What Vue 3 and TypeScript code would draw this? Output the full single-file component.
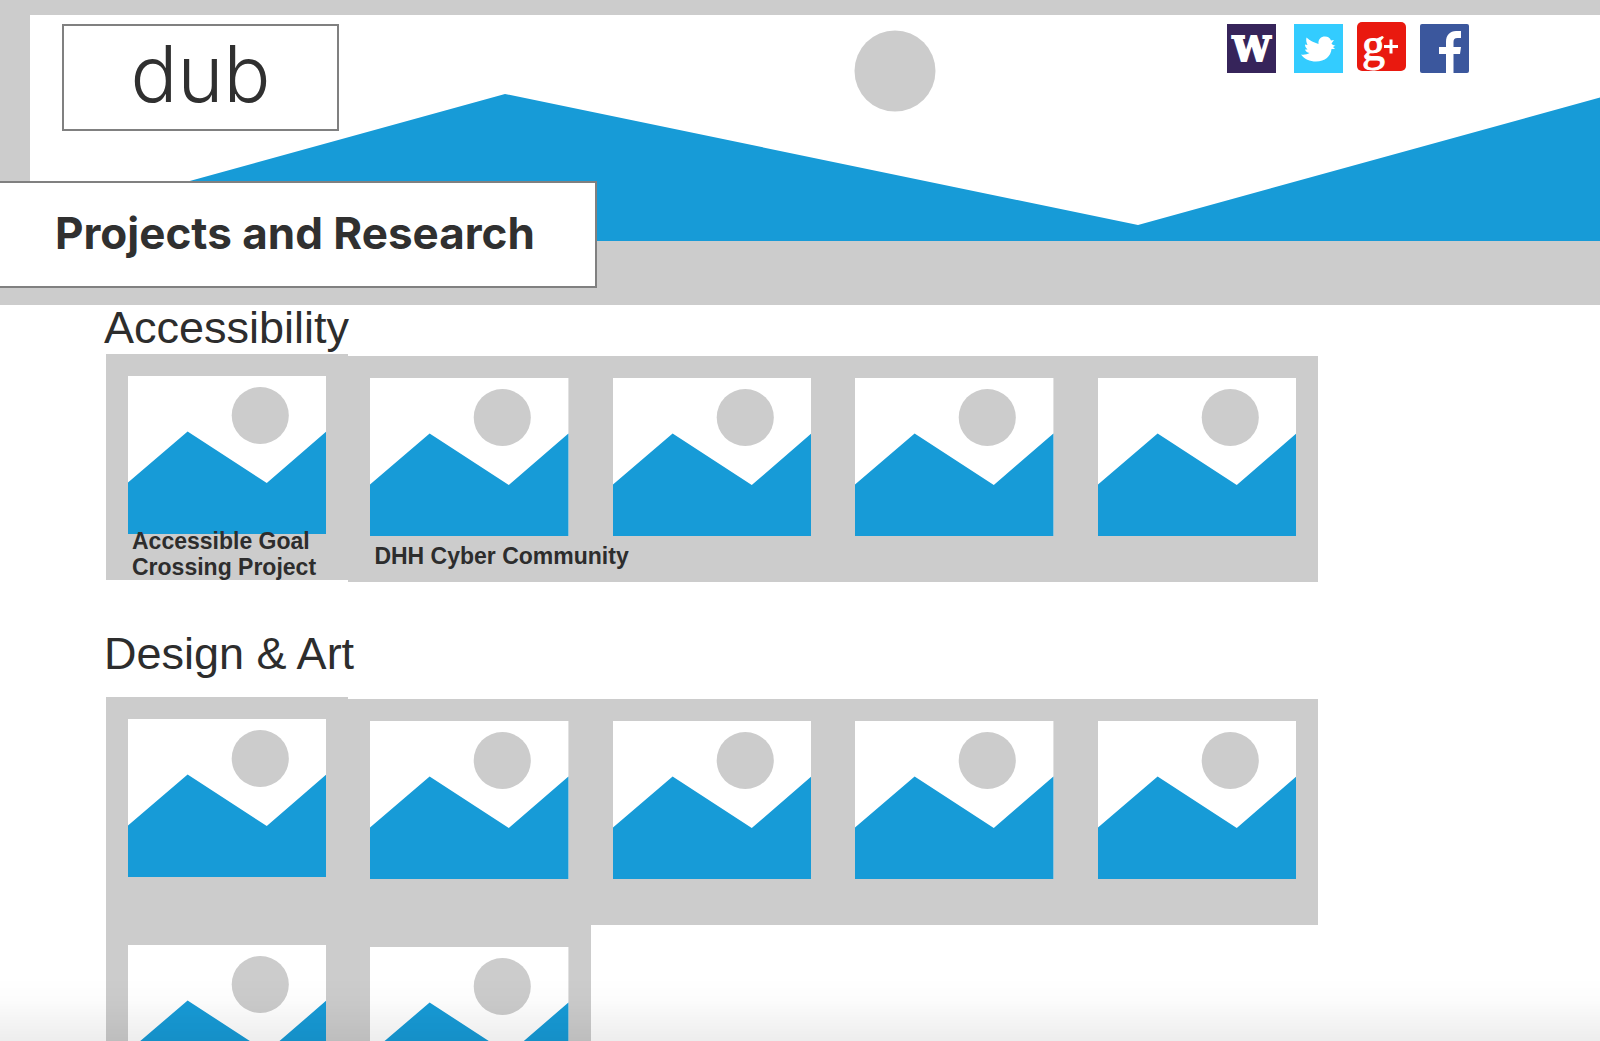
<script setup lang="ts">
interface Project {
  id: number
  title?: string
}

interface Section {
  id: string
  title: string
  projects: Project[]
}

const sections: Section[] = [
  {
    id: 'accessibility',
    title: 'Accessibility',
    projects: [
      { id: 1, title: 'Accessible Goal Crossing Project' },
      { id: 2, title: 'DHH Cyber Community' },
      { id: 3 },
      { id: 4 },
      { id: 5 },
    ],
  },
  {
    id: 'design-art',
    title: 'Design & Art',
    projects: [1, 2, 3, 4, 5, 6, 7].map((id) => ({ id })),
  },
]
</script>

<template>
  <div class="page">
    <header class="hero">
      <svg class="hero-art" viewBox="0 0 1600 305" preserveAspectRatio="xMinYMin slice" aria-hidden="true">
        <rect x="30" y="15" width="1570" height="226" fill="#fff" />
        <circle cx="895" cy="71" r="40.5" fill="#ccc" />
        <path d="M30 225 505 94 1138 225 1600 97.500V241H30Z" fill="#179bd7" />
      </svg>
      <div class="hero-top">
        <a class="logo" href="#">dub</a>
        <nav class="social" aria-label="Social links">
          <a href="#" aria-label="University of Washington">
            <svg width="49" height="51" viewBox="0 0 49 51">
              <rect y="2" width="49" height="49" fill="#36245a" />
              <text class="mark-w" x="24.500" y="39" text-anchor="middle">W</text>
            </svg>
          </a>
          <a href="#" aria-label="Twitter">
            <svg width="49" height="51" viewBox="0 0 49 51">
              <rect y="2" width="49" height="49" fill="#3cf" />
              <path
                d="M7 32.500C10 33 13 32.500 15.500 31C13 30.500 11.500 29.500 11 27.500H13.500C12 26 11 24.500 11 22.500L13.500 23C12 20 12 17.500 12.500 15.500C16 19 20 20.500 24.500 22C24 17 27 14.500 31 14.500C34 14.500 36 16 37 18.500L40 18L37.500 21.500C38.500 23 40 23.500 41.500 23.500L39 25L41 27L37.500 27C37 34 31 39.500 22 39.500C16 39.500 10 37 7 32.500Z"
                fill="#fff"
              />
            </svg>
          </a>
          <a href="#" aria-label="Google Plus">
            <svg width="49" height="51" viewBox="0 0 49 51">
              <rect width="49" height="49" rx="5" fill="#e9190f" />
              <text class="mark-g" x="5" y="38">g</text>
              <path d="M27 24.500H41M34 17.500V31.500" stroke="#fff" stroke-width="3" />
            </svg>
          </a>
          <a href="#" aria-label="Facebook">
            <svg width="49" height="51" viewBox="0 0 49 51">
              <rect y="2" width="49" height="49" rx="2" fill="#3b579d" />
              <path
                d="M26 51V32H19V25H26V20C26 13 30 9 36 9H41V16H37.500C34.500 16 33.500 17.500 33.500 20V25H41L40 32H33.500V51Z"
                fill="#fff"
              />
            </svg>
          </a>
        </nav>
      </div>
      <h1 class="title">Projects and Research</h1>
    </header>

    <main>
      <section v-for="section in sections" :key="section.id" :class="['section', section.id]">
        <h2>{{ section.title }}</h2>
        <ul class="tiles">
          <li v-for="project in section.projects" :key="project.id" class="tile">
            <svg class="picture" viewBox="0 0 198 158" preserveAspectRatio="none" aria-hidden="true">
              <rect width="198" height="158" fill="#fff" />
              <circle cx="132" cy="39.500" r="28.500" fill="#ccc" />
              <path d="M0 106.500 59.500 55.500 138.500 107 198 55.500V158H0Z" fill="#179bd7" />
            </svg>
            <h3 v-if="project.title" class="caption">{{ project.title }}</h3>
          </li>
        </ul>
      </section>
    </main>
    <div class="fade"></div>
  </div>
</template>

<style>
body {
  margin: 0;
  background: #fff;
}
</style>

<style scoped>
.page {
  height: 100vh;
  overflow: auto;
  scrollbar-width: none;
  color: #2d2d2d;
  font-family: 'Liberation Sans', Arial, sans-serif;
}

.hero {
  position: relative;
  height: 305px;
  background: #ccc;
}

.hero-art {
  position: absolute;
  inset: 0;
  width: 100%;
  height: 100%;
}

.hero-top {
  position: relative;
  display: flex;
  justify-content: space-between;
  align-items: flex-start;
  height: 181px;
  padding: 22px 131px 0 62px;
  box-sizing: border-box;
}

.logo {
  width: 277px;
  height: 107px;
  margin-top: 2px;
  box-sizing: border-box;
  border: 2px solid #808080;
  background: #fff;
  color: #303030;
  font: 300 78px/96px Inter, sans-serif;
  text-align: center;
  text-decoration: none;
}

.social {
  display: flex;
  gap: 14px;
}

.social a:first-child {
  margin-right: 4px;
}

.social svg {
  display: block;
  overflow: visible;
}

.mark-w {
  fill: #fff;
  stroke: #fff;
  stroke-width: 2px;
  font: bold 34px 'DejaVu Serif', serif;
}

.mark-g {
  fill: #fff;
  stroke: #fff;
  stroke-width: 1px;
  font: 46px 'Liberation Serif', serif;
}

.title {
  position: relative;
  width: 597px;
  height: 107px;
  margin: 0;
  padding-left: 55px;
  box-sizing: border-box;
  border: 2px solid #808080;
  border-left: 0;
  background: #fff;
  color: #303030;
  font: 700 44px/100px Inter, sans-serif;
  white-space: nowrap;
}

.section {
  padding: 0 22px 0 104px;
}

h2 {
  margin: 0;
  padding-bottom: 6px;
  font-size: 45px;
  font-weight: 400;
  line-height: 45px;
}

.design-art h2 {
  padding: 49px 0 23px;
}

.tiles {
  display: grid;
  grid-template-columns: repeat(5, 1fr);
  max-width: 1212px;
  margin: 0 0 0 2px;
  padding: 0;
  list-style: none;
}

.tile {
  height: 226px;
  padding: 22px 22px 0;
  box-sizing: border-box;
  background: #ccc;
}

/* The lead column rides slightly above the rest of the row. */
.tile:nth-child(5n + 1) {
  margin: -2px 0 2px;
}

.picture {
  display: block;
  width: 100%;
  height: 158px;
}

/* Captions may run over the neighbouring tile. */
.caption {
  position: relative;
  z-index: 1;
  display: flex;
  align-items: center;
  height: 40px;
  margin: 0 -66px 0 4px;
  font-size: 23px;
  line-height: 26px;
}

.fade {
  position: fixed;
  inset: auto 0 0;
  height: 64px;
  background: linear-gradient(rgba(0, 0, 0, 0), rgba(0, 0, 0, 0.01) 35%, rgba(0, 0, 0, 0.07));
  pointer-events: none;
}
</style>
